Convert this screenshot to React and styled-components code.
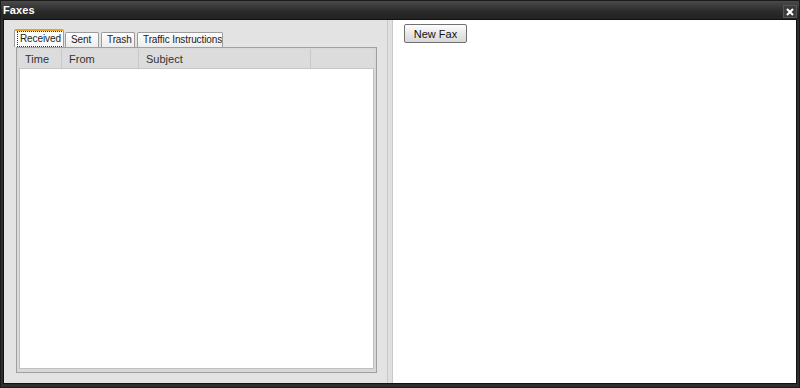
import React from 'react';
import styled, { createGlobalStyle } from 'styled-components';

const Global = createGlobalStyle`
    html, body { margin: 0; padding: 0; background: #2b2b2b; }
    body { font-family: 'Liberation Sans', Arial, sans-serif; font-size: 10px; }
`;

const Window = styled.div`
    width: 800px;
    height: 388px;
    box-sizing: border-box;
    background: #2e2e2e;
    border: 1px solid #1a1a1a;
    display: flex;
    flex-direction: column;
`;

const TitleBar = styled.div`
    height: 18px;
    flex: none;
    display: flex;
    align-items: center;
    justify-content: space-between;
    padding: 0 2px 0 2px;
    background: linear-gradient(#4a4a4a, #2a2a2a 60%, #222);
`;

const Title = styled.span`
    color: #fff;
    font-weight: bold;
    font-size: 11px;
    letter-spacing: 0.1px;
`;

const CloseBtn = styled.div`
    width: 14px;
    height: 13px;
    margin-top: 3px;
    background: #3c3c3c;
    border: 1px solid #555;
    box-sizing: border-box;
    display: flex;
    align-items: center;
    justify-content: center;
`;

const Body = styled.div`
    flex: 1;
    margin: 0 2px 3px 2px;
    display: flex;
    border: 1px solid #111;
    background: #fff;
`;

const LeftPane = styled.div`
    width: 383px;
    flex: none;
    background: #e3e3e3;
    padding: 9px 0 0 10px;
    box-sizing: border-box;
    display: flex;
    flex-direction: column;
`;

const Splitter = styled.div`
    width: 4px;
    flex: none;
    background: #e0e0e0;
    border-left: 1px solid #c8c8c8;
    border-right: 1px solid #c8c8c8;
`;

const RightPane = styled.div`
    flex: 1;
    background: #fff;
    padding: 4px 0 0 11px;
`;

const TabRow = styled.div`
    display: flex;
    align-items: flex-end;
    height: 18px;
`;

const Tab = styled.div`
    flex: none;
    width: ${p => p.w}px;
    margin-right: ${p => p.gap}px;
    height: ${p => (p.active ? 18 : 15)}px;
    box-sizing: border-box;
    padding-left: 4px;
    display: flex;
    align-items: center;
    white-space: nowrap;
    overflow: hidden;
    background: ${p => (p.active ? '#fcfcfc' : 'linear-gradient(#fefefe, #ececec)')};
    border: 1px solid #9c9c9c;
    border-bottom: none;
    border-top: ${p => (p.active ? '2px solid #f0a020' : '1px solid #9c9c9c')};
    border-radius: 2px 2px 0 0;
    color: #222;
`;

const TabLabel = styled.span`
    outline: ${p => (p.focus ? '1px dotted #333' : 'none')};
    outline-offset: 1px;
    padding: 0 1px;
    line-height: 12px;
    letter-spacing: -0.1px;
`;

const Grid = styled.div`
    width: 361px;
    height: 326px;
    box-sizing: border-box;
    margin-left: 2px;
    border: 1px solid #a0a0a0;
    background: #d8d8d8;
    padding: 1px 2px 3px 2px;
    display: flex;
    flex-direction: column;
`;

const Header = styled.div`
    height: 19px;
    flex: none;
    display: flex;
    background: #dcdcdc;
    border-bottom: 1px solid #c6c6c6;
`;

const Col = styled.div`
    width: ${p => p.w}px;
    flex: ${p => (p.w ? 'none' : 1)};
    display: flex;
    align-items: center;
    padding-left: ${p => p.pad}px;
    box-sizing: border-box;
    color: #333;
    font-size: 11px;
    border-right: ${p => (p.last ? 'none' : '1px solid #c8c8c8')};
`;

const Rows = styled.div`
    flex: 1;
    background: #fff;
    border: 1px solid #c0c0c0;
    border-top: none;
`;

const Button = styled.button`
    font-family: 'Liberation Sans', Arial, sans-serif;
    font-size: 11px;
    color: #111;
    width: 63px;
    height: 19px;
    padding: 0;
    background: linear-gradient(#fefefe, #e6e6e6 55%, #d8d8d8);
    border: 1px solid #707070;
    border-radius: 2px;
`;

export default function App() {
    return (
        <>
            <Global />
            <Window>
                <TitleBar>
                    <Title>Faxes</Title>
                    <CloseBtn>
                        <svg width="8" height="8" viewBox="0 0 8 8">
                            <path d="M1 1 L7 7 M7 1 L1 7" stroke="#fff" strokeWidth="2" />
                        </svg>
                    </CloseBtn>
                </TitleBar>
                <Body>
                    <LeftPane>
                        <TabRow>
                            <Tab active w={50} gap={1}><TabLabel focus>Received</TabLabel></Tab>
                            <Tab w={34} gap={2}><TabLabel>Sent</TabLabel></Tab>
                            <Tab w={34} gap={2}><TabLabel>Trash</TabLabel></Tab>
                            <Tab w={86} gap={0}><TabLabel>Traffic Instructions</TabLabel></Tab>
                        </TabRow>
                        <Grid>
                            <Header>
                                <Col w={43} pad={6}>Time</Col>
                                <Col w={77} pad={7}>From</Col>
                                <Col w={172} pad={7}>Subject</Col>
                                <Col last />
                            </Header>
                            <Rows />
                        </Grid>
                    </LeftPane>
                    <Splitter />
                    <RightPane>
                        <Button>New Fax</Button>
                    </RightPane>
                </Body>
            </Window>
        </>
    );
}
